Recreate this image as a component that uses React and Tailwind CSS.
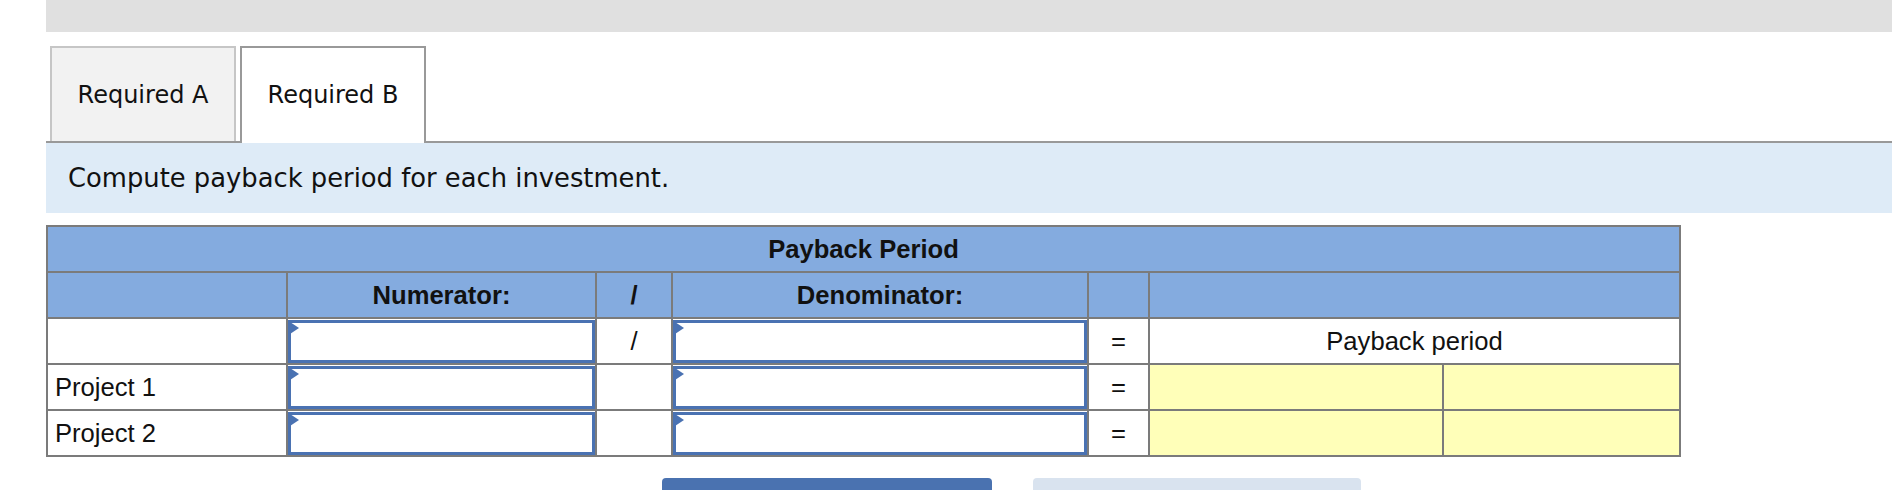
import React from "react";

const HEAD = "bg-[#84abdf]";
const CELL = "border-2 border-[#7b7b7b] p-0 h-[46px]";

// blue input box with the little marker in its corner
const InputBox = () => (
  <div className="relative h-[43px] border-[3px] border-[#4a72b2] bg-white">
    <span className="absolute -left-[1px] -top-[1px] h-0 w-0 border-y-[6px] border-l-[9px] border-y-transparent border-l-[#4a72b2]" />
  </div>
);

const App = () => {
  const rows = [
    { label: "Project 1" },
    { label: "Project 2" },
  ];

  return (
    <div className="min-h-screen bg-white text-[#111111]">
      <div className="ml-[46px]">
        {/* top grey strip */}
        <div className="h-[32px] bg-[#e0e0e0]" />

        {/* tabs */}
        <div className="mt-[14px] flex items-end border-b-2 border-[#999999] pl-[4px]">
          <div
            className="flex h-[95px] w-[186px] items-center justify-center border-2 border-b-0 border-[#c6c6c6] bg-[#f2f2f2] text-[24px]"
            style={{ fontFamily: '"DejaVu Sans", Verdana, sans-serif' }}
          >
            Required A
          </div>
          <div
            className="relative -mb-[2px] ml-[4px] flex h-[97px] w-[186px] items-center justify-center border-2 border-b-0 border-[#999999] bg-white pb-[2px] text-[24px]"
            style={{ fontFamily: '"DejaVu Sans", Verdana, sans-serif' }}
          >
            Required B
          </div>
        </div>

        {/* instruction band */}
        <div
          className="flex h-[70px] items-center bg-[#deebf7] pl-[22px] text-[25.8px]"
          style={{ fontFamily: '"DejaVu Sans", Verdana, sans-serif' }}
        >
          Compute payback period for each investment.
        </div>

        {/* table */}
        <table
          className="mt-[12px] w-[1633px] table-fixed border-collapse text-[25.6px]"
          style={{ fontFamily: '"Liberation Sans", Arial, sans-serif' }}
        >
          <colgroup>
            <col className="w-[240px]" />
            <col className="w-[309px]" />
            <col className="w-[76px]" />
            <col className="w-[416px]" />
            <col className="w-[61px]" />
            <col className="w-[294px]" />
            <col className="w-[237px]" />
          </colgroup>
          <tbody>
            <tr>
              <td colSpan={7} className={`${CELL} ${HEAD} text-center font-bold`}>
                Payback Period
              </td>
            </tr>
            <tr>
              <td className={`${CELL} ${HEAD}`} />
              <td className={`${CELL} ${HEAD} text-center font-bold`}>Numerator:</td>
              <td className={`${CELL} ${HEAD} text-center font-bold`}>/</td>
              <td className={`${CELL} ${HEAD} text-center font-bold`}>Denominator:</td>
              <td className={`${CELL} ${HEAD}`} />
              <td colSpan={2} className={`${CELL} ${HEAD}`} />
            </tr>
            <tr>
              <td className={`${CELL} bg-white`} />
              <td className={CELL}>
                <InputBox />
              </td>
              <td className={`${CELL} text-center`}>/</td>
              <td className={CELL}>
                <InputBox />
              </td>
              <td className={`${CELL} text-center`}>=</td>
              <td colSpan={2} className={`${CELL} text-center`}>
                Payback period
              </td>
            </tr>
            {rows.map((r) => (
              <tr key={r.label}>
                <td className={`${CELL} pl-[7px]`}>{r.label}</td>
                <td className={CELL}>
                  <InputBox />
                </td>
                <td className={CELL} />
                <td className={CELL}>
                  <InputBox />
                </td>
                <td className={`${CELL} text-center`}>=</td>
                <td className={`${CELL} bg-[#ffffb9]`} />
                <td className={`${CELL} bg-[#ffffb9]`} />
              </tr>
            ))}
          </tbody>
        </table>

        {/* buttons, cut off by the window */}
        <div className="mt-[21px] flex gap-[41px] pl-[616px]">
          <div className="h-[40px] w-[330px] rounded-t-[4px] bg-[#4a72b0]" />
          <div className="h-[40px] w-[328px] rounded-t-[4px] bg-[#d9e3ef]" />
        </div>
      </div>
    </div>
  );
};

export default App;
